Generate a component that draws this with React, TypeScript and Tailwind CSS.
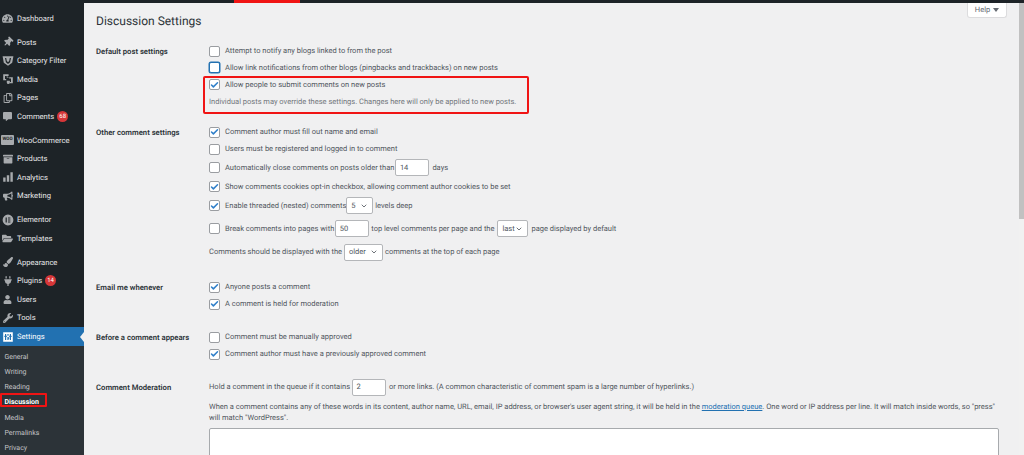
import { ReactNode } from "react";
import { Check, ChevronDown } from "lucide-react";
import {
  FaArchive,
  FaBullhorn,
  FaCommentAlt,
  FaFolderOpen,
  FaPaintBrush,
  FaPlug,
  FaRegCopy,
  FaTachometerAlt,
  FaThumbtack,
  FaUser,
  FaWrench,
} from "react-icons/fa";

function MediaIcon() {
  return (
    <svg viewBox="0 0 20 20" className="h-3 w-3" fill="currentColor">
      <path d="M2 2h9v3H9v2h2v1H8V5H5v5h2v2H2z" />
      <path d="M12 7h6v10h-5v-2h2V9h-3zM8 13h5v2H8z" />
      <circle cx="10.5" cy="16" r="2.5" />
    </svg>
  );
}

function FilterIcon() {
  return (
    <svg viewBox="0 0 20 20" className="h-3 w-3" fill="currentColor">
      <path d="M1 2h18l-2 11-7 5-7-5zM5 5l1.500 7L10 15l3.500-3L15 5h-2l-1 5-2 2-2-2-1-5z" />
    </svg>
  );
}

function BarsIcon() {
  return (
    <svg viewBox="0 0 20 20" className="h-3 w-3" fill="currentColor">
      <path d="M2 11h4v7H2zM8 7h4v11H8zM14 2h4v16h-4z" />
    </svg>
  );
}

function WooIcon() {
  return (
    <span className="flex h-[10px] w-[13px] items-center justify-center rounded-[1px] bg-[#a7aaad] text-[4.500px] font-bold leading-none text-[#1d2327]">
      WOO
    </span>
  );
}

function ElementorIcon() {
  return (
    <svg viewBox="0 0 20 20" className="h-3 w-3" fill="currentColor">
      <path
        fillRule="evenodd"
        d="M10 1a9 9 0 1 0 0 18 9 9 0 0 0 0-18zM6 6h2v8H6zm4 0h4v1.700h-4zm0 3.200h4v1.600h-4zm0 3.100h4V14h-4z"
      />
    </svg>
  );
}

function SettingsIcon() {
  return (
    <svg viewBox="0 0 20 20" className="h-3 w-3 text-white" fill="currentColor">
      <path
        fillRule="evenodd"
        d="M2 2h16v16H2zm3 3v3H4v2h1v5h2v-5h1V8H7V5zm4 5v5h2v-2h1v-2h-1v-1zm0-5v3h2V5zm4 0v3h-1v2h1v5h2v-5h1V8h-1V5z"
      />
    </svg>
  );
}

type MenuItem = { label: string; icon: ReactNode; badge?: string; gap?: boolean };

const menu: MenuItem[] = [
  { label: "Dashboard", icon: <FaTachometerAlt size={11} /> },
  { label: "Posts", icon: <FaThumbtack size={10} className="rotate-45" />, gap: true },
  { label: "Category Filter", icon: <FilterIcon /> },
  { label: "Media", icon: <MediaIcon /> },
  { label: "Pages", icon: <FaRegCopy size={10} /> },
  { label: "Comments", icon: <FaCommentAlt size={9} />, badge: "68" },
  { label: "WooCommerce", icon: <WooIcon />, gap: true },
  { label: "Products", icon: <FaArchive size={10} /> },
  { label: "Analytics", icon: <BarsIcon /> },
  { label: "Marketing", icon: <FaBullhorn size={10} /> },
  { label: "Elementor", icon: <ElementorIcon />, gap: true },
  { label: "Templates", icon: <FaFolderOpen size={11} /> },
  { label: "Appearance", icon: <FaPaintBrush size={10} />, gap: true },
  { label: "Plugins", icon: <FaPlug size={10} />, badge: "14" },
  { label: "Users", icon: <FaUser size={9} /> },
  { label: "Tools", icon: <FaWrench size={10} /> },
];

const submenu = ["General", "Writing", "Reading", "Discussion", "Media", "Permalinks", "Privacy"];

function Sidebar() {
  return (
    <aside className="relative h-[455px] w-[84px] shrink-0 overflow-hidden bg-[#1d2327] pt-[9px] text-[7.600px] text-[#e8e8e9]">
      {menu.map((item) => (
        <div
          key={item.label}
          className={`flex h-[18.500px] items-center ${item.gap ? "mt-[5.500px]" : ""}`}
        >
          <span className="flex w-[15px] shrink-0 justify-center text-[#a7aaad]">{item.icon}</span>
          <span className="ml-[2px]">{item.label}</span>
          {item.badge && (
            <span className="ml-[3px] flex h-[11px] w-[11px] items-center justify-center rounded-full bg-[#d63638] text-[6px] text-white">
              {item.badge}
            </span>
          )}
        </div>
      ))}
      <div className="relative flex h-[19px] items-center bg-[#2271b1] text-white">
        <span className="flex w-[15px] shrink-0 justify-center">
          <SettingsIcon />
        </span>
        <span className="ml-[2px]">Settings</span>
        <span className="absolute right-0 top-[5px] h-0 w-0 border-y-[5px] border-r-[4px] border-y-transparent border-r-[#f0f0f1]" />
      </div>
      <div className="h-[110px] bg-[#2c3338] pt-[3.500px] text-[7px] text-[#c3c4c7]">
        {submenu.map((label) => (
          <div
            key={label}
            className={`flex h-[15.200px] items-center pl-[4.500px] ${label === "Discussion" ? "font-bold text-white" : ""}`}
          >
            {label}
          </div>
        ))}
      </div>
      <div className="absolute left-0 top-[393px] h-[14px] w-[47px] rounded-[1px] border-2 border-[#f01414]" />
    </aside>
  );
}

function Box({ checked = false, focus = false }: { checked?: boolean; focus?: boolean }) {
  return (
    <span
      className={`relative mr-[5px] flex h-[11px] w-[11px] shrink-0 items-center justify-center rounded-[2px] border bg-white ${
        focus ? "border-[#2271b1] shadow-[0_0_0_0.500px_#2271b1]" : "border-[#9a9da1]"
      }`}
    >
      {checked && <Check size={10} strokeWidth={4} className="text-[#2f7fc9]" />}
    </span>
  );
}

function NumberField({ value, className }: { value: string; className: string }) {
  return (
    <span
      className={`flex h-[17px] items-center rounded-[2px] border border-[#b4b6b9] bg-white pl-[3.500px] text-[#50575e] ${className}`}
    >
      {value}
    </span>
  );
}

function SelectField({ value, className }: { value: string; className: string }) {
  return (
    <span
      className={`flex h-[17px] items-center justify-between rounded-[2px] border border-[#b4b6b9] bg-white px-[4px] text-[#50575e] ${className}`}
    >
      {value}
      <ChevronDown size={8} strokeWidth={2.500} />
    </span>
  );
}

function Row({ className = "", children }: { className?: string; children: ReactNode }) {
  return <div className={`flex items-center whitespace-nowrap ${className}`}>{children}</div>;
}

function Section({
  title,
  className = "",
  children,
}: {
  title: string;
  className?: string;
  children: ReactNode;
}) {
  return (
    <section className={`flex ${className}`}>
      <h2 className="w-[113px] shrink-0 whitespace-nowrap pt-[2.500px] text-[7.700px] font-semibold text-[#2c3338]">
        {title}
      </h2>
      <div className="min-w-0 flex-1">{children}</div>
    </section>
  );
}

export default function App() {
  return (
    <div
      className="relative flex h-[455px] w-[1024px] overflow-hidden bg-[#f0f0f1] text-[7.500px] text-[#50575e] [text-rendering:geometricPrecision]"
      style={{ fontFamily: 'Roboto, "Liberation Sans", sans-serif' }}
    >
      <Sidebar />
      <main className="relative min-w-0 flex-1 pl-[12px] pt-[3px]">
        <h1 className="mt-[9px] h-[31px] text-[12px] leading-[18px] text-[#2c3338]">Discussion Settings</h1>

        <Section title="Default post settings" className="h-[81px]">
          <Row className="h-[16px]">
            <Box />
            Attempt to notify any blogs linked to from the post
          </Row>
          <Row className="h-[17px]">
            <Box focus />
            Allow link notifications from other blogs (pingbacks and trackbacks) on new posts
          </Row>
          <Row className="h-[17px]">
            <Box checked />
            Allow people to submit comments on new posts
          </Row>
          <p className="pt-[2px] leading-[14px] text-[#72777c]">
            Individual posts may override these settings. Changes here will only be applied to new posts.
          </p>
        </Section>

        <Section title="Other comment settings" className="h-[155px]">
          <Row className="h-[16px]">
            <Box checked />
            Comment author must fill out name and email
          </Row>
          <Row className="h-[18px]">
            <Box />
            Users must be registered and logged in to comment
          </Row>
          <Row className="h-[19px]">
            <Box />
            Automatically close comments on posts older than
            <NumberField value="14" className="ml-[1px] mr-[3px] w-[34px]" />
            days
          </Row>
          <Row className="h-[19px]">
            <Box checked />
            Show comments cookies opt-in checkbox, allowing comment author cookies to be set
          </Row>
          <Row className="h-[19px]">
            <Box checked />
            Enable threaded (nested) comments
            <SelectField value="5" className="mr-[2px] w-[27px]" />
            levels deep
          </Row>
          <Row className="h-[27px]">
            <Box />
            Break comments into pages with
            <NumberField value="50" className="ml-[1px] mr-[2px] w-[34px]" />
            top level comments per page and the
            <SelectField value="last" className="ml-[3px] mr-[3px] w-[31px]" />
            page displayed by default
          </Row>
          <Row className="h-[20px]">
            Comments should be displayed with the
            <SelectField value="older" className="mx-[2px] w-[39px]" />
            comments at the top of each page
          </Row>
        </Section>

        <Section title="Email me whenever" className="h-[50px]">
          <Row className="h-[16px]">
            <Box checked />
            Anyone posts a comment
          </Row>
          <Row className="h-[18px]">
            <Box checked />
            A comment is held for moderation
          </Row>
        </Section>

        <Section title="Before a comment appears" className="h-[50px]">
          <Row className="h-[16px]">
            <Box />
            Comment must be manually approved
          </Row>
          <Row className="h-[18px]">
            <Box checked />
            Comment author must have a previously approved comment
          </Row>
        </Section>

        <Section title="Comment Moderation">
          <Row className="h-[16px]">
            Hold a comment in the queue if it contains
            <NumberField value="2" className="mx-[2px] w-[34px]" />
            <span className="ml-[1px]">
              or more links. (A common characteristic of comment spam is a large number of hyperlinks.)
            </span>
          </Row>
          <p className="mt-[7px] w-[800px] whitespace-nowrap leading-[10.500px]">
            When a comment contains any of these words in its content, author name, URL, email, IP address, or
            browser&apos;s user agent string, it will be held in the{" "}
            <a className="text-[#2271b1] underline">moderation queue</a>. One word or IP address per line. It will
            match inside words, so &quot;press&quot;
            <br />
            will match &quot;WordPress&quot;.
          </p>
          <div className="mt-[5px] h-[60px] w-[790px] rounded-[2px] border border-[#a7aaad] bg-white" />
        </Section>

        <div className="absolute right-[17px] top-[3px] flex h-[15px] w-[40px] items-center justify-center gap-[3px] rounded-b-[3px] border border-t-0 border-[#dcdcde] bg-white text-[7.500px] text-[#646970]">
          Help
          <span className="h-0 w-0 border-x-[3px] border-t-[4px] border-x-transparent border-t-[#646970]" />
        </div>
        <div className="absolute right-[0px] top-0 h-full w-[5px] bg-[#f1f1f1]">
          <div className="h-[219px] w-full bg-[#c1c1c1]" />
        </div>
        <div className="absolute left-[-84px] top-0 flex h-[3px] w-[1024px]">
          <div className="w-[234px] bg-[#1d2327]" />
          <div className="w-[66px] bg-[#f01414]" />
          <div className="flex-1 bg-[#1d2327]" />
        </div>

        <div className="absolute left-[119px] top-[76px] h-[38px] w-[326px] rounded-[2px] border-2 border-[#f01414]" />
      </main>
    </div>
  );
}
